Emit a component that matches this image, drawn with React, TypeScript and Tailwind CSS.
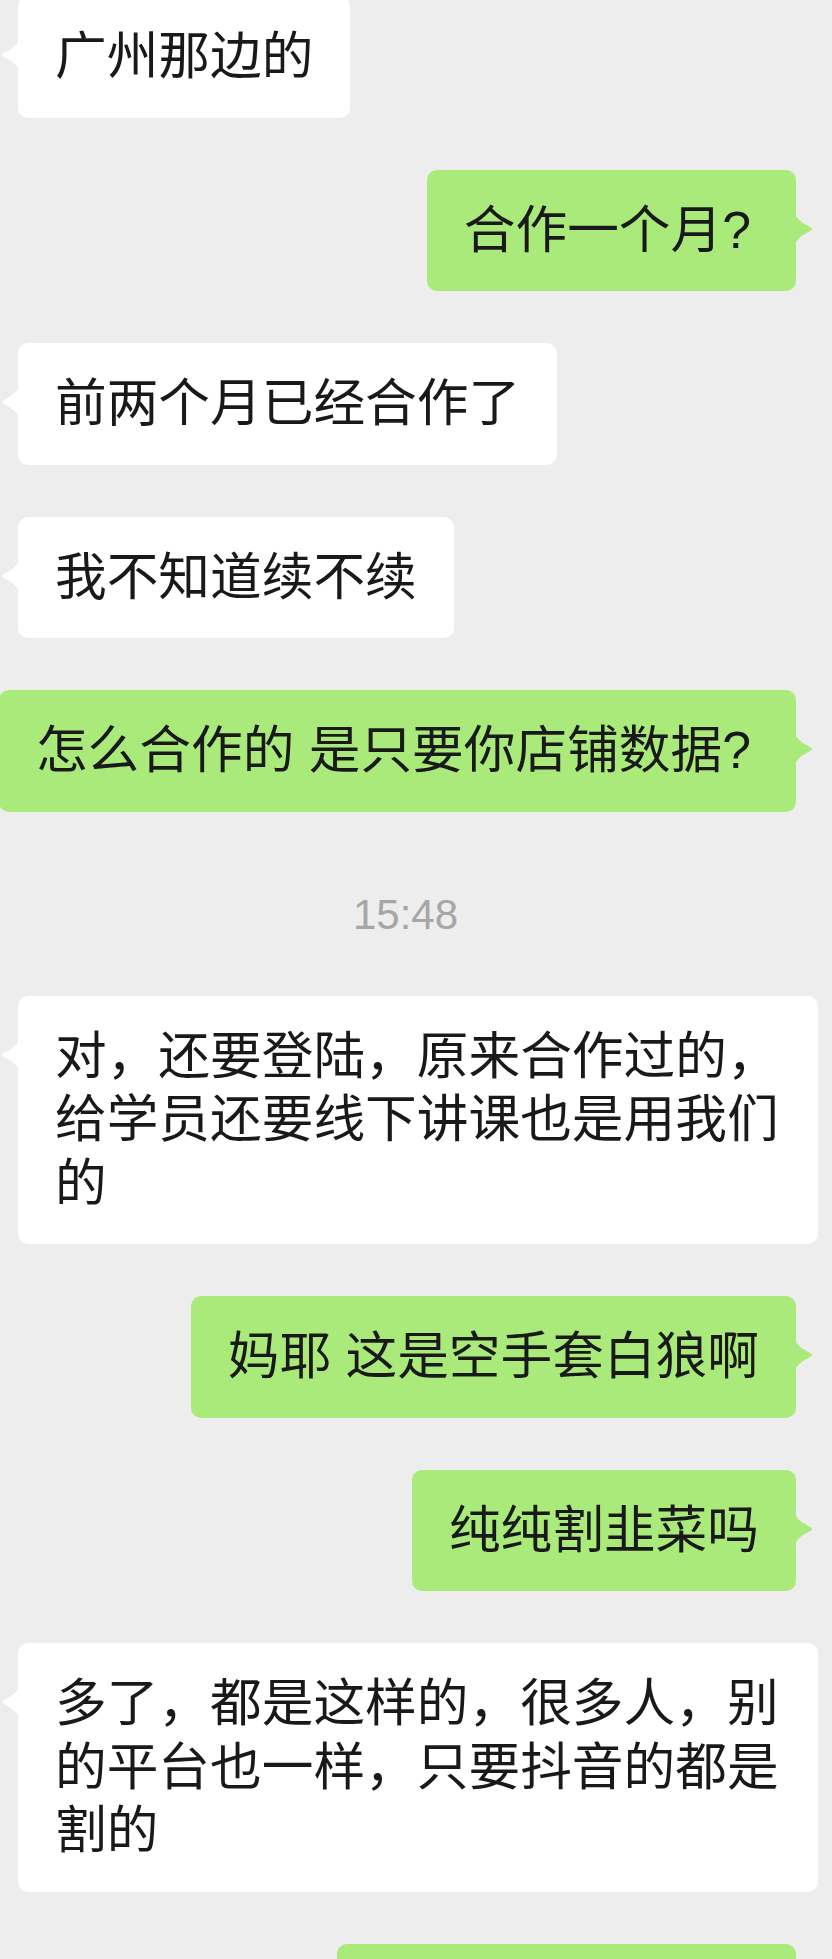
import type { ReactNode } from "react";

type Side = "left" | "right";

function Tail({ side }: { side: Side }) {
  if (side === "left") {
    return (
      <svg
        className="absolute top-[44px] -left-[17px] h-[30px] w-[18px]"
        viewBox="0 0 18 30"
      >
        <path
          d="M18 0 C16 4 14 6 10 9 L2 13.5 Q0 15 2 16.5 L10 21 C14 24 16 26 18 30 Z"
          fill="#ffffff"
        />
      </svg>
    );
  }
  return (
    <svg
      className="absolute top-[44px] -right-[17px] h-[30px] w-[18px]"
      viewBox="0 0 18 30"
    >
      <path
        d="M0 0 C2 4 4 6 8 9 L16 13.5 Q18 15 16 16.5 L8 21 C4 24 2 26 0 30 Z"
        fill="#a9ea7a"
      />
    </svg>
  );
}

function Bubble({
  side,
  children,
  className = "",
}: {
  side: Side;
  children: ReactNode;
  className?: string;
}) {
  const mine = side === "right";
  return (
    <div
      className={
        mine ? "flex justify-end pr-[36px]" : "flex justify-start pl-[18px]"
      }
    >
      <div
        className={`relative max-w-[800px] shrink-0 rounded-[10px] px-[37px] py-[29px] text-[51.7px] leading-[63.5px] text-[#191919] ${
          mine ? "bg-[#a9ea7a]" : "bg-white"
        } ${className}`}
      >
        <Tail side={side} />
        {children}
      </div>
    </div>
  );
}

// the question mark sits a bit wider in the original font
const Q = () => <span className="mr-[8px]">?</span>;

export default function App() {
  return (
    <div className="h-[1959px] w-[832px] overflow-hidden bg-[#ededed] font-['Liberation_Sans','Noto_Sans_CJK_SC',sans-serif]">
      <div className="-mt-[4px] flex flex-col gap-[52px]">
        <Bubble side="left">广州那边的</Bubble>
        <Bubble side="right">
          合作一个月<Q />
        </Bubble>
        <Bubble side="left">前两个月已经合作了</Bubble>
        <Bubble side="left">我不知道续不续</Bubble>
        {/* wider than the row, runs off the left edge */}
        <Bubble side="right" className="max-w-none whitespace-nowrap">
          怎么合作的 是只要你店铺数据<Q />
        </Bubble>

        <div className="pt-[31px] pr-[21px] pb-[9px] text-center text-[42px] leading-[40px] text-[#a6a6a6]">
          15:48
        </div>

        <Bubble side="left">
          对，还要登陆，原来合作过的，给学员还要线下讲课也是用我们的
        </Bubble>
        <Bubble side="right">妈耶 这是空手套白狼啊</Bubble>
        <Bubble side="right">纯纯割韭菜吗</Bubble>
        <Bubble side="left">
          多了，都是这样的，很多人，别的平台也一样，只要抖音的都是割的
        </Bubble>
        {/* next message is cut off by the bottom edge */}
        <Bubble side="right" className="w-[459px]">
          {"\u00a0"}
        </Bubble>
      </div>
    </div>
  );
}
